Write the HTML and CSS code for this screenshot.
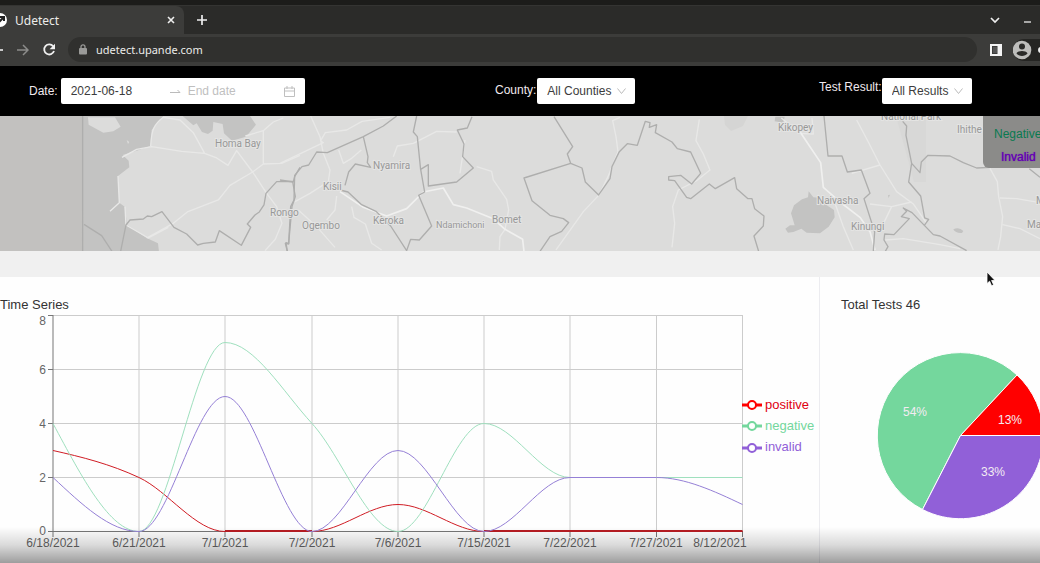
FILE: index.html
```
<!DOCTYPE html>
<html lang="en">
<head>
<meta charset="utf-8">
<title>Udetect</title>
<link rel="stylesheet" href="styles.css">
</head>
<body>
<div class="screen">
  <header class="browser">
    <div class="tabs">
      <div class="tab">
        <svg class="favicon" width="8" height="16" viewBox="0 0 8 16" aria-hidden="true"><circle cx="0" cy="8" r="7" fill="#fff"/><path d="M0 5h4v4M4 5L-2 11" fill="none" stroke="#222" stroke-width="2"/></svg>
        <span class="tab-title">Udetect</span>
        <button class="icon-button" aria-label="Close tab"><svg width="8" height="8" viewBox="0 0 8 8"><path d="M1 1l6 6M7 1L1 7" stroke="#eee" stroke-width="1.6"/></svg></button>
      </div>
      <button class="icon-button new-tab" aria-label="New tab"><svg width="12" height="12" viewBox="0 0 12 12"><path d="M6 1v10M1 6h10" stroke="#eee" stroke-width="1.7"/></svg></button>
      <div class="window-buttons">
        <button class="icon-button" aria-label="Search tabs"><svg width="10" height="8" viewBox="0 0 10 8"><path d="M1 2l4 4 4-4" fill="none" stroke="#eee" stroke-width="1.7"/></svg></button>
        <button class="icon-button" aria-label="Minimize"><svg width="8" height="8" viewBox="0 0 8 8"><path d="M0 6h7" stroke="#ddd" stroke-width="1.4"/></svg></button>
      </div>
    </div>
    <div class="toolbar">
      <button class="icon-button" aria-label="Back"><svg width="4" height="14" viewBox="0 0 4 14"><path d="M0 7h3" stroke="#eee" stroke-width="1.6"/></svg></button>
      <button class="icon-button forward" aria-label="Forward"><svg width="12" height="12" viewBox="0 0 12 12"><path d="M0 6h11M6 1l5 5-5 5" fill="none" stroke="#8c8c8a" stroke-width="1.5"/></svg></button>
      <button class="icon-button reload" aria-label="Reload"><svg width="14" height="14" viewBox="0 0 14 14"><path d="M11.2 3.4A5 5 0 1 0 12 8" fill="none" stroke="#f0f0f0" stroke-width="1.8"/><path d="M13 .8v5.4H7.6z" fill="#f0f0f0"/></svg></button>
      <label class="address">
        <svg width="8" height="11" viewBox="0 0 8 11" aria-hidden="true"><rect y="4" width="8" height="6.5" rx="1" fill="#9a9a98"/><path d="M2 4V2.8a2 2 0 0 1 4 0V4" fill="none" stroke="#9a9a98" stroke-width="1.3"/></svg>
        <input type="text" value="udetect.upande.com" aria-label="Address">
      </label>
      <button class="icon-button side-panel" aria-label="Side panel"><svg width="12" height="12" viewBox="0 0 12 12"><path d="M0 0h12v12H0zM2 2v8h5.500V2z" fill="#f4f4f4" fill-rule="evenodd"/><path d="M3 3h4v6H3z" fill="#555"/></svg></button>
      <button class="profile" aria-label="Profile"><svg width="27" height="20" viewBox="0 0 27 20"><circle cx="9" cy="10" r="9.300" fill="#bdbdbb"/><circle cx="9" cy="6.500" r="3" fill="#2a2a28"/><path d="M3.400 13.300c2-3.200 9.200-3.200 11.200 0-2.500 3.500-8.700 3.500-11.200 0z" fill="#2a2a28"/><circle cx="28" cy="10" r="3" fill="#eee"/></svg></button>
    </div>
  </header>

  <form class="filters">
    <div class="filter filter-date">
      <label for="start">Date:</label>
      <div class="range">
        <input id="start" type="text" value="2021-06-18">
        <svg width="11" height="6" viewBox="0 0 11 6" aria-hidden="true"><path d="M0 4.500h10L7.500 2" fill="none" stroke="#bbb"/></svg>
        <input type="text" placeholder="End date" aria-label="End date">
        <svg width="11" height="11" viewBox="0 0 11 11" aria-hidden="true"><path d="M.5 2h10v8.500H.5zM.5 5h10M3 0v3M8 0v3" fill="none" stroke="#bfbfbf"/></svg>
      </div>
    </div>
    <div class="filter filter-county">
      <label for="county">County:</label>
      <div class="select">
        <select id="county"><option>All Counties</option></select>
        <svg width="9" height="7" viewBox="0 0 9 7" aria-hidden="true"><path d="M.5.5l4 5 4-5" fill="none" stroke="#bbb"/></svg>
      </div>
    </div>
    <div class="filter filter-result">
      <label for="result">Test Result:</label>
      <div class="select">
        <select id="result"><option>All Results</option></select>
        <svg width="9" height="7" viewBox="0 0 9 7" aria-hidden="true"><path d="M.5.5l4 5 4-5" fill="none" stroke="#bbb"/></svg>
      </div>
    </div>
  </form>

  <section class="map" aria-label="Map">
    <svg class="map-canvas" viewBox="0 0 1040 135" preserveAspectRatio="xMidYMid slice">
      <rect width="1040" height="135" fill="#dcdcdb"/>
      <path d="M896 0h30v66h-12z" fill="#d8d8d7"/>
      <path d="M724 0h24l-5 10-12 5-6-6z" fill="#d5d5d4"/>
      <g transform="translate(0 -6) scale(.3333)">
        <path class="water" d="M0 18H490L455 60 452 108 410 122 368 135 386 152 388 172 354 198 358 278 374 290 382 345 440 384 474 400 477 425H0z"/>
        <path d="M0 18H248V425H0z" fill="#c2c1bf"/>
        <path class="water" d="M548 18H750L768 44 738 80 696 92 672 70 668 42 640 36 638 62 624 72 606 66 590 40 580 46z"/>
        <path d="M264 22H345L362 50 340 64 310 68 266 44zM380 90l8 6-4 6z" fill="#dcdcdb"/>
        <path class="road" d="M452 108C455 60 460 45 490 22L540 30 580 68 614 130M366 142L410 118 455 110 545 124 614 130 650 144 684 166 710 122 758 186 800 250 830 290 846 340 826 388 795 422M440 384L520 340 562 306 655 270 690 226 758 186 790 162 845 160 900 136M736 78L790 62 820 36 850 24M790 62V162M354 198L358 278 330 304M375 290L378 345 445 384 505 352"/>
        <path class="border" d="M248 18V424M252 343L305 377 336 424M362 424L378 345 390 330 430 327 442 318 455 320 486 305 522 352 560 372 593 405 610 400 646 396 658 362 724 406 752 352 742 342 765 315 778 306 792 285 798 250 830 215 878 214 886 260 876 290 866 400 858 398 862 424M880 216L884 200 900 172"/>
      </g>
      <g transform="translate(280 -6) scale(.3333)">
        <path class="road" d="M0 160L80 122 130 98 122 92 136 68 200 60 246 34 330 22M92 18L120 80 130 130 150 180 145 215 90 250 45 275M176 120L190 160 215 145 244 120M340 140L352 108 400 100 470 64 530 66M555 90L540 190M590 170L635 184 640 210 680 268 686 300 675 358 660 380 658 420M215 290L222 322 256 342 275 400 305 420M55 300L110 350 165 412M170 258L165 300 140 330"/>
        <path class="road major" d="M180 245L250 292 320 318 380 296 430 246 490 234 520 284 560 294 640 326 675 358 728 388 732 424"/>
        <path class="border" d="M350 18L310 48 250 80 142 128 110 126 86 165 66 170 44 196 42 270 32 290 26 402 16 400 22 424M0 210L40 216M250 80L264 140 262 158 272 172 226 162 206 186 195 226M180 240L204 246 245 284 288 304 332 348 380 422 392 388 418 390 455 348 416 256 434 246 422 178 445 164 445 228 530 216 580 174 548 140 552 102 532 60 562 54 576 20M410 18L400 66 412 80 422 180"/>
      </g>
      <g transform="translate(520 -6) scale(.3333)">
        <path class="road" d="M300 22L278 32 288 80 294 125 264 200 238 254 190 305 108 420M538 28L528 92 550 132 570 180 530 212 475 240 458 290 464 340 456 412"/>
        <path class="border" d="M102 20L158 110 142 132 152 160 186 174 196 216 236 255 270 206 276 170 298 125 322 101 352 106 376 34 390 38 388 52 410 44 406 68 456 96 472 116 512 126 542 190 515 222 482 196 446 200 446 210 464 212 500 262 512 266 568 222 586 236 644 203 650 236 684 266 696 266 704 296 732 318 730 348 702 378 716 424M152 160L12 204 36 272 90 316 130 326 146 338 125 364 90 380 60 424"/>
      </g>
      <g transform="translate(760 -6) scale(.3333)">
        <path class="water" d="M146 244L160 262 182 264 198 284 222 300 224 322 206 350 180 370 140 368 124 356 100 366 84 368 76 356 90 346 104 346 93 310 102 286 126 268 144 262zM46 20h28l-4 18-26-4zM580 358q18-8 30 5l-4 6q-18 2-26-11zM384 256l6-2-4 10z"/>
        <path class="road" d="M64 24L120 70 160 72 156 24M290 30L325 96 360 165 410 245 460 282 500 340M275 190L360 165M330 282L395 290 455 276M225 280L250 350 280 420M366 350L395 290M690 175L712 215 716 260 728 320 722 380 714 420M720 264L770 266 840 278M728 344L780 356 840 386M376 390L430 386 540 404 600 416"/>
        <path class="road major" d="M110 50L150 110 182 158 190 232 240 276 300 322 330 365 345 420"/>
        <path class="border" d="M192 18L204 138 246 138 262 186 304 180 330 250 312 266 344 366 340 424M428 34L440 48 438 76 455 160 480 188 484 156 504 136 570 138 610 158 650 174 690 172M455 160L446 216 482 258 494 324 506 328 492 348M376 424L384 410 372 390 374 372 402 374 448 326 424 320 440 304 430 294 456 308 520 374 540 378 620 422M808 176L840 202"/>
      </g>
      <g class="places">
        <text x="215" y="31">Homa Bay</text>
        <text x="270" y="100">Rongo</text>
        <text x="323" y="74">Kisii</text>
        <text x="373" y="53">Nyamira</text>
        <text x="302" y="113">Ogembo</text>
        <text x="373" y="108">Keroka</text>
        <text class="small" x="436" y="112">Ndamichoni</text>
        <text x="492" y="107">Bomet</text>
        <text x="778" y="15">Kikopey</text>
        <text x="881" y="4">National Park</text>
        <text x="957" y="17">Ihithe</text>
        <text x="817" y="88">Naivasha</text>
        <text x="851" y="114">Kinungi</text>
        <text x="1036" y="88">M</text>
        <text x="1027" y="112">Ma</text>
      </g>
    </svg>
    <div class="map-legend"><span class="is-negative">Negative</span><span class="is-invalid">Invalid</span></div>
  </section>

  <main class="cards">
    <section class="card series">
      <h2>Time Series</h2>
      <svg class="chart" viewBox="0 0 820 250">
        <path d="M53 2.500H742.500M53 56.500H742.500M53 110.500H742.500M53 164.500H742.500M139 2v216M225 2v216M312 2v216M398 2v216M484 2v216M570 2v216M656.500 2v216M742.500 2v216" fill="none" stroke="#ccc"/>
        <path d="M53 2v222M53 218.500H742.500M48 2.500h5M48 56.500h5M48 110.500h5M48 164.500h5M48 218.500h5M139 218v6M225 218v6M312 218v6M398 218v6M484 218v6M570 218v6M656.500 218v6M742.500 218v6" fill="none" stroke="#777"/>
        <g class="line">
          <path stroke="#d01c24" d="M53 137.500C82 144 110 151 139 164.500 168 178 196 218.500 225 218.500H312C341 218.500 369 191.500 398 191.500 427 191.500 455 218.500 484 218.500H742.500"/>
          <path class="flat" stroke="#b81c22" d="M225 218H312M484 218H742.500"/>
          <path stroke="#9fe0be" d="M53 110.500C82 164.500 110 218.500 139 218.500 168 218.500 196 29.500 225 29.500 254 29.500 283 79 312 110.500 341 142 369 218.500 398 218.500 427 218.500 455 110.500 484 110.500 513 110.500 541 164.500 570 164.500H742.500"/>
          <path stroke="#9580d6" d="M53 164.500C82 191.500 110 218.500 139 218.500 168 218.500 196 83.500 225 83.500 254 83.500 283 218.500 312 218.500 341 218.500 369 137.500 398 137.500 427 137.500 455 218.500 484 218.500 513 218.500 541 164.500 570 164.500H656.500C685 164.500 714 178 742.500 191.500"/>
        </g>
        <g class="axis-y">
          <text x="46" y="12">8</text><text x="46" y="61">6</text><text x="46" y="115">4</text><text x="46" y="169">2</text><text x="46" y="222">0</text>
        </g>
        <g class="axis-x">
          <text x="53" y="234">6/18/2021</text><text x="139" y="234">6/21/2021</text><text x="225" y="234">7/1/2021</text><text x="312" y="234">7/2/2021</text><text x="398" y="234">7/6/2021</text><text x="484" y="234">7/15/2021</text><text x="570" y="234">7/22/2021</text><text x="656" y="234">7/27/2021</text><text x="720" y="234">8/12/2021</text>
        </g>
        <g class="legend">
          <g stroke="red"><path d="M742 92h20"/><circle cx="752" cy="92" r="4"/></g>
          <g stroke="#74d79d"><path d="M742 113h20"/><circle cx="752" cy="113" r="4"/></g>
          <g stroke="#9160d8"><path d="M742 135h20"/><circle cx="752" cy="135" r="4"/></g>
          <text x="765" y="96" fill="#e00010">positive</text>
          <text x="765" y="117" fill="#74d79d">negative</text>
          <text x="765" y="138" fill="#9160d8">invalid</text>
        </g>
      </svg>
    </section>
    <section class="card totals">
      <h2>Total Tests 46</h2>
      <svg class="chart" viewBox="820 0 220 250">
        <g stroke="#fff">
          <path fill="#74d79d" d="M960.500 122.500L1017 62A83 83 0 1 0 922.500 196.500z"/>
          <path fill="red" d="M960.500 122.500H1043.500A83 83 0 0 0 1017 62z"/>
          <path fill="#9160d8" d="M960.500 122.500L922.500 196.500A83 83 0 0 0 1043.500 122.500z"/>
        </g>
        <g class="slice-label"><text x="915" y="103">54%</text><text x="1010" y="111">13%</text><text x="993" y="163">33%</text></g>
      </svg>
    </section>
  </main>
  <div class="shade"></div>
  <svg class="pointer" width="10" height="16" viewBox="0 0 10 16" aria-hidden="true"><path d="M1 1v11.500l2.600-2.300 2 4.600 2-1-2-4.300H9z" fill="#111" stroke="#fff" stroke-width=".8"/></svg>
</div>
</body>
</html>
```
FILE: styles.css
```
* { box-sizing: border-box; }
body {
  margin: 0;
  background: #fefefe;
  font-family: "Liberation Sans", Arial, sans-serif;
  font-size: 12px;
  color: #333;
}
button, input, select { font: inherit; color: inherit; border: 0; padding: 0; background: none; }
input { min-width: 0; outline: 0; }
svg { display: block; flex: none; }
.screen { position: relative; overflow: hidden; min-height: 100vh; }

.browser { background: #3c3c3a; border-top: 5px solid #1c1c1a; font-family: "Noto Sans", sans-serif; color: #ececea; }
.tabs { display: flex; align-items: center; height: 29px; background: #2b2b29; border-top: 1px solid #343432; }
.tab { display: flex; align-items: center; width: 184px; height: 28px; padding-right: 9px; background: #3c3c3a; border-radius: 0 8px 0 0; }
.tab-title { flex: 1; padding-left: 7px; }
.icon-button { display: flex; align-items: center; justify-content: center; }
.new-tab { margin-left: 12px; }
.window-buttons { display: flex; gap: 24px; margin-left: auto; padding-right: 8px; }
.toolbar { display: flex; align-items: center; height: 32px; padding-bottom: 1px; }
.forward { margin-left: 13px; }
.reload { margin-left: 13px; }
.address { display: flex; flex: 1; align-items: center; gap: 9px; height: 25px; margin-left: 12px; padding-left: 11px; border-radius: 13px; background: #30302e; font-size: 11px; }
.address input { flex: 1; }
.side-panel { margin: 0 11px 0 13px; }
.profile { padding: 1px 0; background: #252523; border-radius: 11px 0 0 11px; }

.filters { display: grid; grid-template-columns: 466fr 324fr 221fr; align-items: center; height: 50px; padding-left: 29px; background: #000; color: #f0e9ee; }
.filter { display: flex; align-items: center; }
.filter-date { gap: 3px; }
.filter-county { gap: 1px; }
.filter-county label { padding-bottom: 2px; }
.filter-result label { padding-bottom: 8px; }
.range, .select { display: flex; align-items: center; height: 26px; border-radius: 2px; background: #fff; color: #3c3c3c; }
.range { gap: 7px; width: 244px; padding: 0 10px; }
.range input { flex: 1; }
.range input:first-child { flex: 0 0 92px; }
.range input::placeholder { color: #bfbfbf; opacity: 1; }
.select { padding: 0 9px 0 10px; gap: 5px; }
.select select { appearance: none; }

.map { position: relative; height: 135px; }
.map-canvas { width: 100%; height: 100%; }
.water { fill: #c3c3c2; }
.road { fill: none; stroke: #e8e8e7; stroke-width: 4px; stroke-linejoin: round; }
.major { stroke: #f0f0ef; stroke-width: 5px; }
.border { fill: none; stroke: #aeaead; stroke-width: 4px; stroke-linejoin: round; }
.places { font-family: Roboto, sans-serif; font-size: 10px; fill: #989898; stroke: #e4e4e3; stroke-width: 2px; paint-order: stroke; }
.places .small { font-size: 9px; }
.map-legend { position: absolute; top: 0; right: 0; display: flex; flex-direction: column; width: 57px; height: 52px; padding: 7px 0 0 11px; overflow: hidden; line-height: 23px; border-radius: 0 0 0 6px; background: #8b8b89; }
.is-negative { color: #087a50; }
.is-invalid { padding-left: 7px; color: #6500b4; text-shadow: 0 0 1px #6500b4; }

.cards { display: grid; grid-template-columns: 820fr 220fr; border-top: 26px solid #f0f0f0; }
.card { padding-top: 19px; }
.series { box-shadow: inset -1px 0 #ececf0; }
.card h2 { margin: 0; font-size: 13px; line-height: 17px; font-weight: 400; }
.totals h2 { padding-left: 21px; }
.chart { width: 100%; height: auto; }
.line { fill: none; stroke-width: 1px; }
.flat { stroke-width: 2px; }
.axis-x, .axis-y { fill: #666; }
.axis-x, .slice-label { text-anchor: middle; }
.axis-y { text-anchor: end; }
.legend { fill: #fff; stroke-width: 3px; font-size: 13px; }
.legend circle { stroke-width: 2px; }
.slice-label { fill: #f3ecf3; }

.shade { position: absolute; right: 0; bottom: 0; left: 0; height: 36px; background: linear-gradient(rgba(0, 0, 0, 0), rgba(0, 0, 0, .14) 50%, rgba(0, 0, 0, .38)); pointer-events: none; }
.pointer { position: absolute; top: 271px; left: 95%; margin-left: -2px; }
```
